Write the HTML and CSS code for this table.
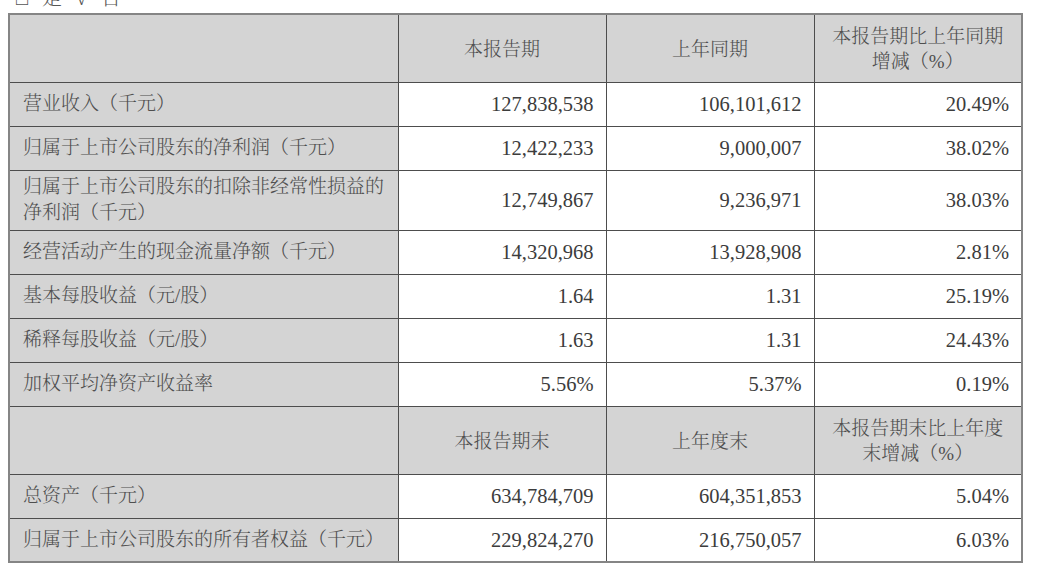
FILE: index.html
```html
<!DOCTYPE html>
<html lang="zh-CN">
<head>
<meta charset="utf-8">
<title>主要会计数据和财务指标</title>
<link rel="stylesheet" href="styles.css">
</head>
<body>
<div class="note"><span class="note-text">□是√否</span></div>
<table class="fin">
  <colgroup>
    <col class="c-label">
    <col class="c-num">
    <col class="c-num">
    <col class="c-num">
  </colgroup>
  <tbody>
    <tr class="head">
      <th class="label"></th>
      <th>本报告期</th>
      <th>上年同期</th>
      <th>本报告期比上年同期<br>增减（%）</th>
    </tr>
    <tr>
      <td class="label">营业收入（千元）</td>
      <td>127,838,538</td>
      <td>106,101,612</td>
      <td>20.49%</td>
    </tr>
    <tr>
      <td class="label">归属于上市公司股东的净利润（千元）</td>
      <td>12,422,233</td>
      <td>9,000,007</td>
      <td>38.02%</td>
    </tr>
    <tr class="tall">
      <td class="label">归属于上市公司股东的扣除非经常性损益的<br>净利润（千元）</td>
      <td>12,749,867</td>
      <td>9,236,971</td>
      <td>38.03%</td>
    </tr>
    <tr>
      <td class="label">经营活动产生的现金流量净额（千元）</td>
      <td>14,320,968</td>
      <td>13,928,908</td>
      <td>2.81%</td>
    </tr>
    <tr>
      <td class="label">基本每股收益（元/股）</td>
      <td>1.64</td>
      <td>1.31</td>
      <td>25.19%</td>
    </tr>
    <tr>
      <td class="label">稀释每股收益（元/股）</td>
      <td>1.63</td>
      <td>1.31</td>
      <td>24.43%</td>
    </tr>
    <tr>
      <td class="label">加权平均净资产收益率</td>
      <td>5.56%</td>
      <td>5.37%</td>
      <td>0.19%</td>
    </tr>
    <tr class="head">
      <th class="label"></th>
      <th>本报告期末</th>
      <th>上年度末</th>
      <th>本报告期末比上年度<br>末增减（%）</th>
    </tr>
    <tr>
      <td class="label">总资产（千元）</td>
      <td>634,784,709</td>
      <td>604,351,853</td>
      <td>5.04%</td>
    </tr>
    <tr>
      <td class="label">归属于上市公司股东的所有者权益（千元）</td>
      <td>229,824,270</td>
      <td>216,750,057</td>
      <td>6.03%</td>
    </tr>
  </tbody>
</table>
</body>
</html>
```

FILE: styles.css
```css
html, body {
  margin: 0;
  padding: 0;
  background: #ffffff;
}

body {
  font-family: "Liberation Serif", "Noto Serif CJK SC", "Noto Sans CJK SC", serif;
  color: #4a4a4a;
}

.note {
  height: 13px;
  overflow: hidden;
  padding-left: 16px;
}

.note-text {
  display: block;
  font-size: 20px;
  line-height: 20px;
  margin-top: -12px;
  letter-spacing: 14px;
  color: #555;
  font-weight: 300;
}

.fin {
  margin-left: 8px;
  width: 1015px;
  table-layout: fixed;
  border-collapse: collapse;
  border: 2px solid #858585;
  font-size: 19px;
}

.c-label { width: 389px; }
.c-num { width: 208px; }

.fin td, .fin th {
  border: 1px solid #4d4d4d;
  padding: 0 12px 0 13px;
  height: 44px;
  box-sizing: border-box;
  font-weight: 300;
  vertical-align: middle;
  line-height: 26px;
}

.fin td {
  text-align: right;
  color: #3c3c3c;
  background: #ffffff;
  font-size: 20.5px;
}

.fin td.label {
  text-align: left;
  background: #d4d4d4;
  color: #4e4e4e;
  font-size: 19px;
}

.fin tr.head th {
  height: 68px;
  background: #d4d4d4;
  text-align: center;
  color: #4e4e4e;
  line-height: 25px;
  padding: 2px 6px 0;
}

.fin tr.tall td {
  height: 60px;
}
```
